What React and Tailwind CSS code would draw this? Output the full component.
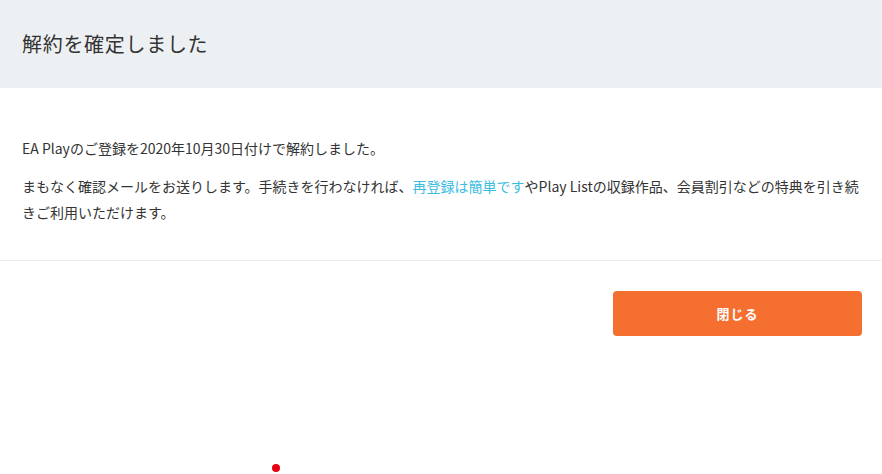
import React from 'react';

export default function App() {
  return (
    <div className="relative w-[882px] h-[474px] bg-white text-[#333] font-['Noto_Sans_CJK_JP','Noto_Sans',sans-serif] overflow-hidden">
      {/* ヘッダー */}
      <div className="h-[88px] bg-[#edf0f2] flex items-center px-[22px]">
        <h1 className="text-[20px] font-normal text-[#333] tracking-[0.7px]">解約を確定しました</h1>
      </div>
      {/* 本文 */}
      <div className="pl-[22px] pr-[16px] pt-[47px] pb-[35px] border-b border-[#ececec] text-[14px] leading-[26px]">
        <p>EA Playのご登録を2020年10月30日付けで解約しました。</p>
        <p className="mt-[12px]">
          まもなく確認メールをお送りします。手続きを行わなければ、<a href="#" className="text-[#3cbde0]">再登録は簡単です</a>やPlay Listの収録作品、会員割引などの特典を引き続きご利用いただけます。
        </p>
      </div>
      <div className="flex justify-end pr-[20px] pt-[30px]">
        <button className="w-[249px] h-[45px] rounded-[4px] bg-[#f56f30] text-white text-[13px] font-bold tracking-[1px]">閉じる</button>
      </div>
      <span className="absolute left-[272px] top-[464px] w-[8px] h-[8px] rounded-full bg-[#e60012]"></span>
    </div>
  );
}
